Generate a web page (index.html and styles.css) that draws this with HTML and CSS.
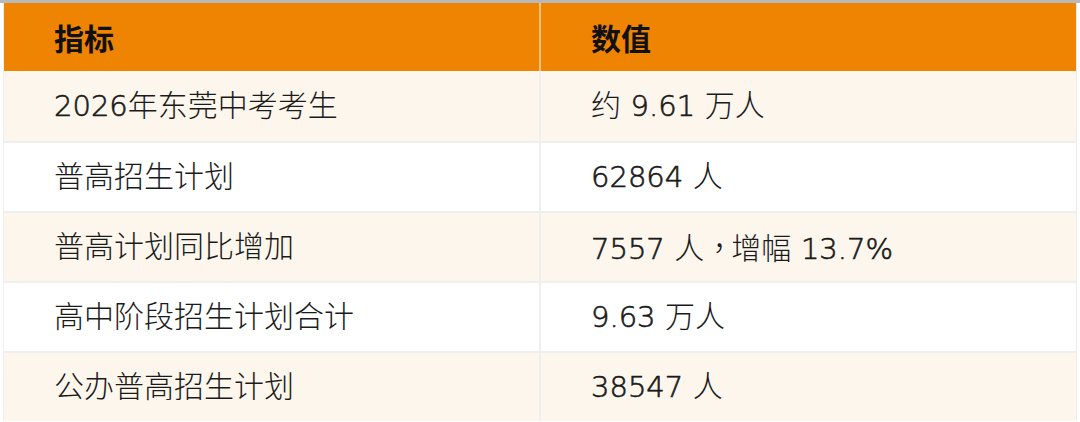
FILE: index.html
```html
<!DOCTYPE html>
<html lang="zh-CN">
<head>
<meta charset="utf-8">
<link rel="stylesheet" href="styles.css">
</head>
<body>
<div class="topbar"></div>
<div class="wrap">
<table class="data">
  <thead>
    <tr><th>指标</th><th>数值</th></tr>
  </thead>
  <tbody>
    <tr class="alt"><td><span class="num">2026</span>年东莞中考考生</td><td>约 <span class="num">9.61</span> 万人</td></tr>
    <tr><td>普高招生计划</td><td><span class="num">62864</span> 人</td></tr>
    <tr class="alt"><td>普高计划同比增加</td><td><span class="num">7557</span> 人<span class="comma" lang="zh-TW">，</span>增幅 <span class="num">13.7%</span></td></tr>
    <tr><td>高中阶段招生计划合计</td><td><span class="num">9.63</span> 万人</td></tr>
    <tr class="alt"><td>公办普高招生计划</td><td><span class="num">38547</span> 人</td></tr>
  </tbody>
</table>
</div>
</body>
</html>
```
FILE: styles.css
```css
html, body {
  margin: 0;
  padding: 0;
  background: #ffffff;
  overflow: hidden;
}
body {
  font-family: "DejaVu Sans", "Noto Sans CJK SC", sans-serif;
  color: #1a1a1a;
}
.topbar {
  height: 3px;
  background: #b9b9b9;
}
.wrap {
  padding: 0 3px 0 3px;
}
.data {
  width: 100%;
  border-collapse: collapse;
  table-layout: fixed;
  border-left: 1px solid #f0f0f0;
  border-right: 1px solid #ececec;
}
.data th, .data td {
  text-align: left;
  padding: 0 0 0 50px;
  font-size: 30px;
  line-height: 1;
  white-space: nowrap;
}
.data th {
  font-family: "Noto Sans CJK SC", sans-serif;
  background: #ef8302;
  color: #111;
  font-weight: 700;
  height: 68px;
  border-right: 2px solid #f7c27c;
}
.data th:last-child { border-right: none; }
.data td {
  height: 68px;
  border-top: 2px solid #efefef;
  border-right: 2px solid #efefef;
  font-weight: 300;
}
.data td .num {
  font-size: 29px;
  -webkit-text-stroke: 0.6px #1a1a1a;
}
.data td .comma {
  font-family: "Noto Sans CJK TC", sans-serif;
  margin-right: -3px;
}
.data td:last-child { border-right: none; }
.data tbody tr:first-child td { border-top: none; height: 70px; }
.data tr.alt td {
  background: #fdf6ec;
}
```
